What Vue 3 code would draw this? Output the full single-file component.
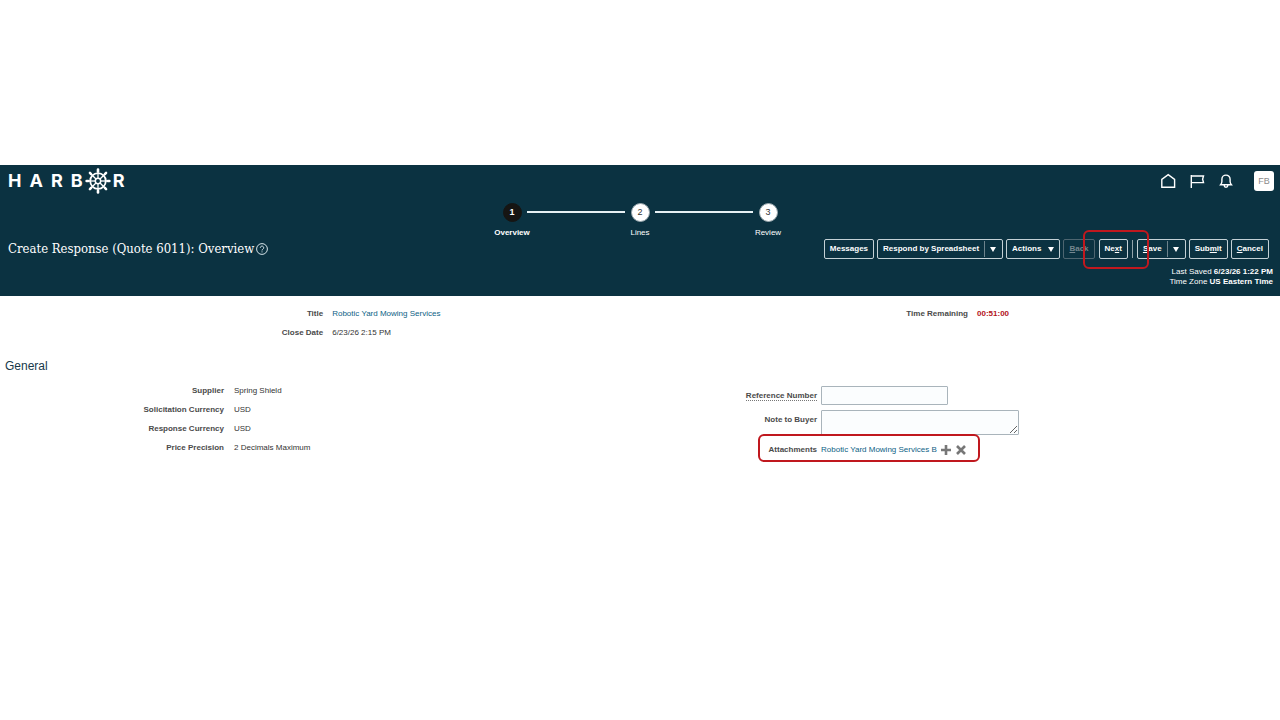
<script setup>
import { ref } from 'vue'

const steps = [
  { n: 1, label: 'Overview', active: true },
  { n: 2, label: 'Lines', active: false },
  { n: 3, label: 'Review', active: false },
]
const supplierFacts = [
  { label: 'Supplier', value: 'Spring Shield' },
  { label: 'Solicitation Currency', value: 'USD' },
  { label: 'Response Currency', value: 'USD' },
  { label: 'Price Precision', value: '2 Decimals Maximum' },
]
const reference = ref('')
const note = ref('')
const spokes = [0, 45, 90, 135, 180, 225, 270, 315]
</script>

<template>
  <div class="page">
    <header class="banner">
      <div class="topbar">
        <div class="logo" role="img" aria-label="HARBOR">
          <span>H</span><span>A</span><span>R</span><span>B</span>
          <svg class="wheel" viewBox="0 0 26 26" fill="none" stroke="#fff">
            <circle cx="13" cy="13" r="7.8" stroke-width="1.8" />
            <circle cx="13" cy="13" r="2.7" stroke-width="1.5" />
            <g v-for="a in spokes" :key="a" :transform="`rotate(${a} 13 13)`">
              <path d="M13 10.5V2" stroke-width="1.3" />
              <path d="M13 3.2V1.6" stroke-width="2.6" stroke-linecap="round" />
            </g>
          </svg>
          <span>R</span>
        </div>
        <nav class="tools">
          <button class="icon" aria-label="Home">
            <svg viewBox="0 0 16 16"><path d="M1.8 14.2V6.4L8.200 1.600l6.400 4.800v7.800z" /></svg>
          </button>
          <button class="icon" aria-label="Flag">
            <svg viewBox="0 0 16 16"><path d="M2.300 15V2M2.300 3h12.200l-.9 3.300.9 3.300H2.300" /></svg>
          </button>
          <button class="icon" aria-label="Notifications">
            <svg viewBox="0 0 16 16"><path d="M2.600 11.700h10.800c-1-1.200-1.300-1.900-1.300-3.200V6.200a4.100 4.100 0 0 0-8.200 0v2.300c0 1.300-.3 2-1.300 3.200zM6.200 12.500a1.800 1.800 0 0 0 3.600 0" /></svg>
          </button>
          <button class="avatar">FB</button>
        </nav>
      </div>

      <ol class="train">
        <li v-for="s in steps" :key="s.n" :class="{ active: s.active }">
          <span class="dot">{{ s.n }}</span>
          <span class="step-label">{{ s.label }}</span>
        </li>
      </ol>

      <div class="titlebar">
        <h1>Create Response (Quote 6011): Overview</h1>
        <button class="help" aria-label="Help">
          <svg viewBox="0 0 12 12" fill="none" stroke="#d5e3e8" stroke-width="1">
            <circle cx="6" cy="6" r="5.400" />
            <path d="M4.300 4.800a1.700 1.700 0 1 1 2.600 1.400c-.6.400-.9.600-.9 1.300M6 8.400v1" />
          </svg>
        </button>
        <div class="actions">
          <button class="btn">Messages</button>
          <div class="split">
            <button>Respond by Spreadsheet</button>
            <button class="drop" aria-label="More respond options"><i class="caret"></i></button>
          </div>
          <button class="btn menu">Actions<i class="caret"></i></button>
          <button class="btn" disabled><u>B</u>ack</button>
          <div class="next">
            <button class="btn">Ne<u>x</u>t</button>
            <span class="callout"></span>
          </div>
          <span class="divider"></span>
          <div class="split">
            <button><u>S</u>ave</button>
            <button class="drop" aria-label="More save options"><i class="caret"></i></button>
          </div>
          <button class="btn">Sub<u>m</u>it</button>
          <button class="btn"><u>C</u>ancel</button>
        </div>
      </div>

      <div class="saved">
        <div>Last Saved <b>6/23/26 1:22 PM</b></div>
        <div>Time Zone <b>US Eastern Time</b></div>
      </div>
    </header>

    <main>
      <section class="summary">
        <dl class="facts">
          <dt>Title</dt>
          <dd><a href="#">Robotic Yard Mowing Services</a></dd>
          <dt>Close Date</dt>
          <dd>6/23/26 2:15 PM</dd>
        </dl>
        <dl class="facts deadline">
          <dt>Time Remaining</dt>
          <dd class="timer">00:51:00</dd>
        </dl>
      </section>

      <h2>General</h2>
      <section class="general">
        <dl class="facts narrow">
          <template v-for="f in supplierFacts" :key="f.label">
            <dt>{{ f.label }}</dt>
            <dd>{{ f.value }}</dd>
          </template>
        </dl>
        <form class="form" @submit.prevent>
          <label for="reference"><span class="dotted">Reference Number</span></label>
          <input id="reference" v-model="reference" type="text" />
          <label for="note" class="note-label">Note to Buyer</label>
          <textarea id="note" v-model="note"></textarea>
          <span class="attach-label">Attachments</span>
          <div class="attach">
            <a href="#">Robotic Yard Mowing Services B</a>
            <button type="button" aria-label="Add attachment">
              <svg viewBox="0 0 10 10"><path d="M5 0v10M0 5h10" /></svg>
            </button>
            <button type="button" aria-label="Remove attachment">
              <svg viewBox="0 0 10 10"><path d="M1 1l8 8M9 1L1 9" /></svg>
            </button>
            <span class="callout"></span>
          </div>
        </form>
      </section>
    </main>
  </div>
</template>

<style>
body {
  background: #fff;
}
</style>

<style scoped>
*,
*::before {
  box-sizing: border-box;
}
.page {
  min-height: 100vh;
  padding-top: 165px;
  font-family: "Liberation Sans", Arial, sans-serif;
  font-size: 8px;
  line-height: 10px;
  color: #333;
}
button {
  font: inherit;
  color: inherit;
  background: none;
  border: 0;
  padding: 0;
}
svg {
  display: block;
}
a {
  color: #0d6285;
  text-decoration: none;
}
.banner {
  background: #0b3241;
  color: #fff;
  padding-bottom: 9px;
}
.topbar {
  display: flex;
  justify-content: space-between;
  align-items: center;
  height: 32px;
  padding: 0 6px 0 8px;
}
.logo {
  display: flex;
  align-items: center;
  gap: 8px;
  font: 700 18px/20px Inter, sans-serif;
}
.wheel {
  width: 26px;
  height: 26px;
  margin: 0 -6px;
}
.tools {
  display: flex;
  align-items: center;
  gap: 13px;
}
.icon svg {
  width: 16px;
  height: 16px;
  fill: none;
  stroke: #fff;
  stroke-width: 1.4;
}
.avatar {
  width: 20px;
  height: 20px;
  margin-left: 7px;
  border-radius: 3px;
  background: #fff;
  color: #8b8b8b;
  font-size: 9px;
}
.train {
  display: flex;
  justify-content: center;
  margin: 0;
  padding: 6px 0 0;
  list-style: none;
}
.train li {
  position: relative;
  width: 10%;
  display: flex;
  flex-direction: column;
  align-items: center;
  gap: 6px;
}
.train li + li::before {
  content: "";
  position: absolute;
  top: 8px;
  left: -50%;
  width: 100%;
  height: 2px;
  border: solid #0b3241;
  border-width: 0 15px;
  background: #e6f0f3;
  background-clip: padding-box;
}
.dot {
  z-index: 1;
  width: 19px;
  height: 19px;
  border: 1px solid #9aa8ae;
  border-radius: 50%;
  background: #fff;
  color: #333;
  font-size: 9px;
  line-height: 17px;
  text-align: center;
}
.active .dot {
  background: #161513;
  border-color: #161513;
  color: #fff;
  font-weight: 700;
}
.active .step-label {
  font-weight: 700;
}
.titlebar {
  display: flex;
  align-items: center;
  padding: 1px 11px 0 8px;
}
h1 {
  margin: 0;
  font: 400 13px/20px "DejaVu Serif Condensed", "DejaVu Serif", Georgia, serif;
}
.help {
  margin-left: 2px;
}
.help svg {
  width: 12px;
  height: 12px;
}
.actions {
  display: flex;
  align-items: center;
  gap: 3px;
  margin-left: auto;
  font-weight: 700;
}
.btn,
.split {
  height: 20px;
  border: 1px solid #c4d1d6;
  border-radius: 2px;
}
.btn {
  padding: 0 5px;
}
.btn:disabled {
  color: #74868e;
  border-color: #4d6570;
}
.menu {
  display: flex;
  align-items: center;
  gap: 7px;
}
.split {
  display: flex;
  align-items: center;
}
.split button {
  padding: 0 5px;
}
.split .drop {
  height: 16px;
  padding-right: 6px;
  border-left: 1px solid #6d838c;
}
.caret {
  display: block;
  border: solid transparent;
  border-width: 5px 3px 0;
  border-top-color: #fff;
}
.next {
  position: relative;
  margin-left: 1px;
}
.callout {
  position: absolute;
  border: 2px solid #c0181e;
  border-radius: 6px;
  pointer-events: none;
}
.next .callout {
  inset: -9px -21px -10px -16px;
}
.divider {
  width: 1px;
  height: 18px;
  margin: 0 1px;
  background: #91a3aa;
}
.saved {
  padding: 8px 7px 0 0;
  text-align: right;
}
.summary,
.general {
  display: grid;
  grid-template-columns: 1fr 1fr;
  align-items: start;
}
.summary {
  padding-top: 13px;
}
.facts {
  display: grid;
  grid-template-columns: 50.5% 1fr;
  gap: 9px;
  margin: 0;
}
.facts.deadline {
  grid-template-columns: 51.25% 1fr;
}
.facts.narrow {
  grid-template-columns: 35% 1fr;
  column-gap: 10px;
}
dt,
label,
.attach-label {
  font-weight: 700;
  color: #4a4a4a;
  text-align: right;
}
dd {
  margin: 0;
}
.timer {
  color: #b3141b;
  font-weight: 700;
}
h2 {
  margin: 20px 5px 12px;
  font-size: 12px;
  line-height: 16px;
  font-weight: 400;
  color: #17384a;
}
.form {
  display: grid;
  grid-template-columns: 177px 1fr;
  gap: 5px 4px;
  align-items: center;
}
.dotted {
  border-bottom: 1px dotted #777;
}
.note-label {
  align-self: start;
  padding-top: 5px;
}
input,
textarea {
  display: block;
  font: inherit;
  border: 1px solid #a9b4bb;
  border-radius: 1px;
  background: #fbfdfe;
}
input {
  width: 127px;
  height: 19px;
}
textarea {
  width: 198px;
  height: 25px;
}
.attach {
  position: relative;
  justify-self: start;
  display: flex;
  align-items: center;
  gap: 5px;
  padding: 5px 0;
}
.attach-label {
  padding: 5px 0;
}
.attach a {
  margin-right: -1px;
}
.attach svg {
  width: 10px;
  height: 10px;
  stroke: #777;
  stroke-width: 2.6;
}
.attach .callout {
  inset: -6px -14px -2px -63px;
}
</style>
